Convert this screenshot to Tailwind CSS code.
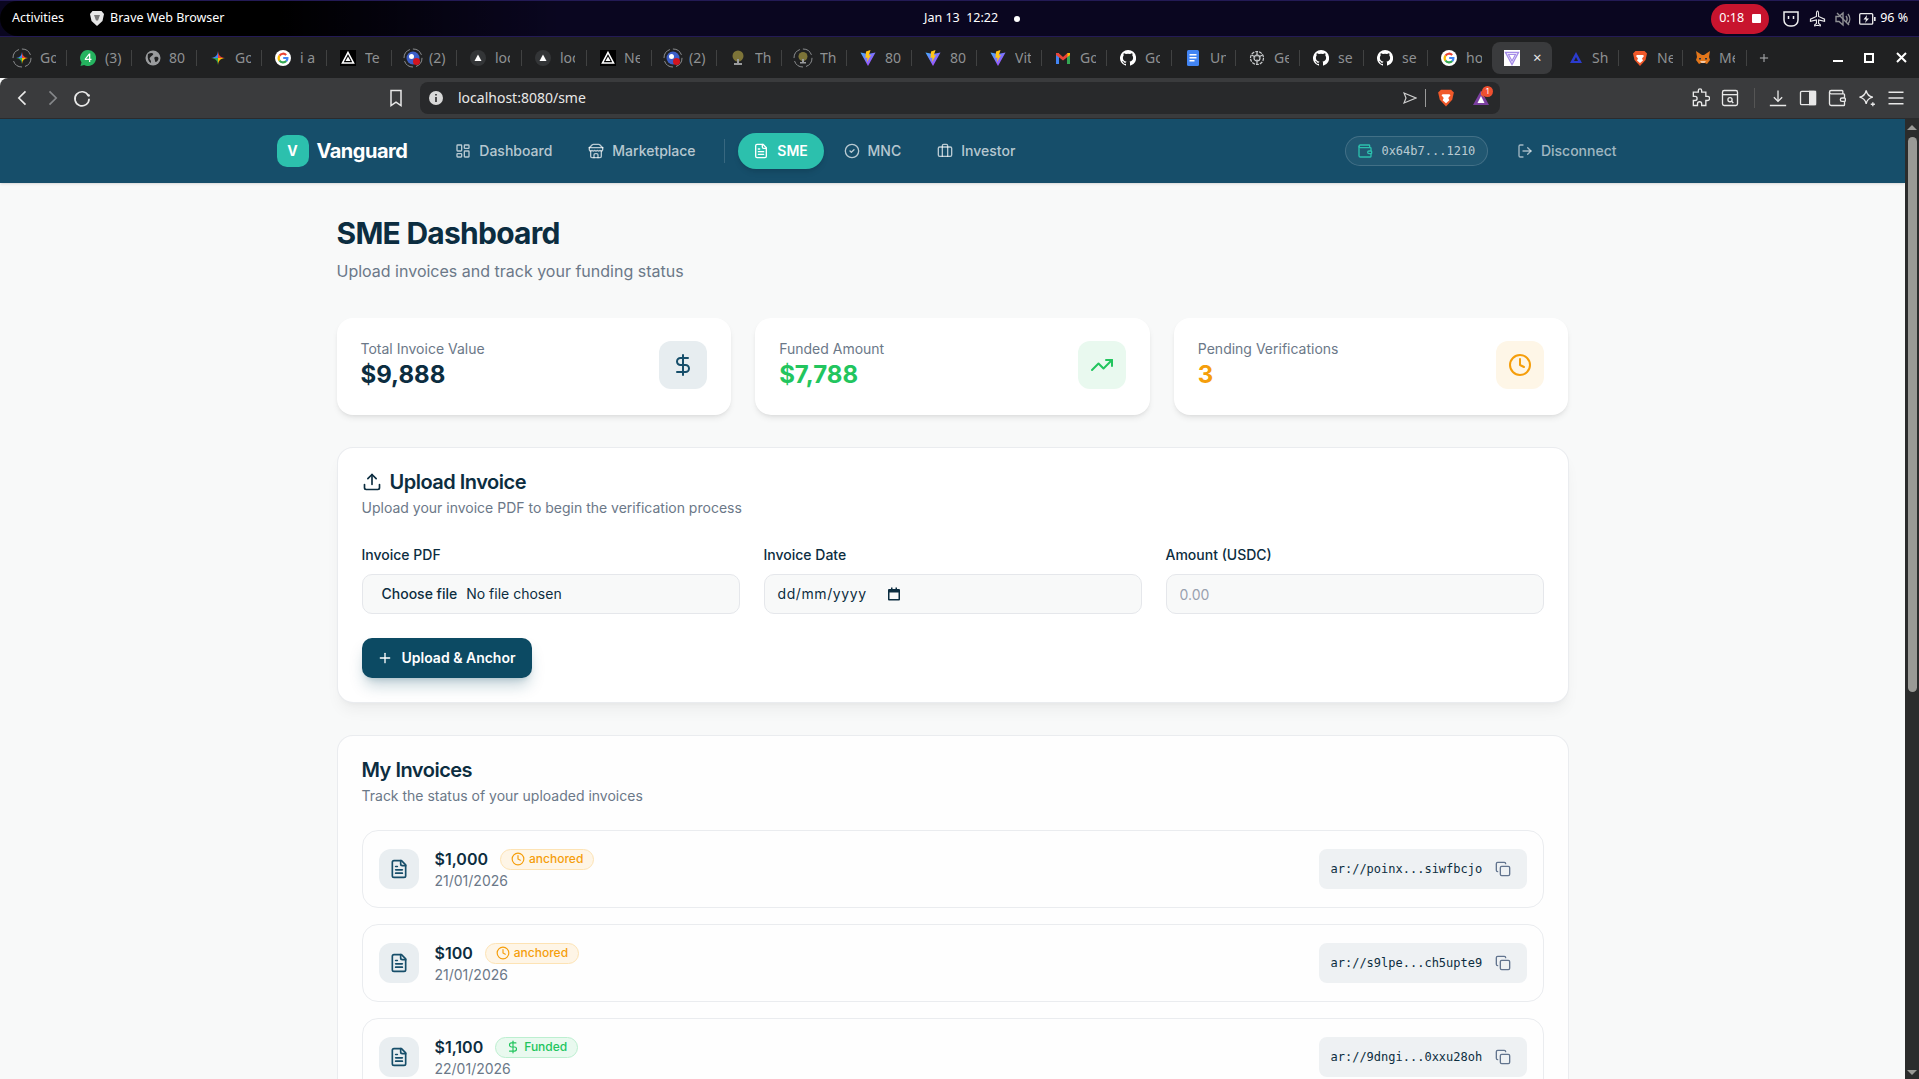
<!DOCTYPE html>
<html lang="en">
<head>
  <meta charset="UTF-8" />
  <title>Vanguard - SME Dashboard</title>
  <script src="https://cdn.jsdelivr.net/npm/@tailwindcss/browser@4"></script>
</head>
<body class="h-screen overflow-hidden flex flex-col bg-[#f8f9f9] font-[family-name:Inter,sans-serif] text-[#0c2d40]">

  <!-- shared icons -->
  <svg class="absolute w-0 h-0" aria-hidden="true">
    <defs>
      <linearGradient id="vit" x1="0" y1="0" x2="1" y2="1"><stop offset="0" stop-color="#41b0ff"/><stop offset="1" stop-color="#bd34fe"/></linearGradient>
    </defs>
    <symbol id="i-dash" viewBox="0 0 24 24"><rect x="3" y="3" width="7" height="9" rx="1"/><rect x="14" y="3" width="7" height="5" rx="1"/><rect x="14" y="12" width="7" height="9" rx="1"/><rect x="3" y="16" width="7" height="5" rx="1"/></symbol>
    <symbol id="i-store" viewBox="0 0 24 24"><path d="m2 7 4.41-4.41A2 2 0 0 1 7.83 2h8.34a2 2 0 0 1 1.42.59L22 7"/><path d="M4 12v8a2 2 0 0 0 2 2h12a2 2 0 0 0 2-2v-8"/><path d="M15 22v-4a2 2 0 0 0-2-2h-2a2 2 0 0 0-2 2v4"/><path d="M2 7h20"/><path d="M22 7v3a2 2 0 0 1-2 2a2.7 2.7 0 0 1-1.59-.63.7.7 0 0 0-.82 0A2.7 2.7 0 0 1 16 12a2.7 2.7 0 0 1-1.59-.63.7.7 0 0 0-.82 0A2.7 2.7 0 0 1 12 12a2.7 2.7 0 0 1-1.59-.63.7.7 0 0 0-.82 0A2.7 2.7 0 0 1 8 12a2.7 2.7 0 0 1-1.59-.63.7.7 0 0 0-.82 0A2.7 2.7 0 0 1 4 12a2 2 0 0 1-2-2V7"/></symbol>
    <symbol id="i-file" viewBox="0 0 24 24"><path d="M15 2H6a2 2 0 0 0-2 2v16a2 2 0 0 0 2 2h12a2 2 0 0 0 2-2V7Z"/><path d="M14 2v4a2 2 0 0 0 2 2h4"/><path d="M10 9H8"/><path d="M16 13H8"/><path d="M16 17H8"/></symbol>
    <symbol id="i-check" viewBox="0 0 24 24"><circle cx="12" cy="12" r="10"/><path d="m9 12 2 2 4-4"/></symbol>
    <symbol id="i-case" viewBox="0 0 24 24"><path d="M16 20V4a2 2 0 0 0-2-2h-4a2 2 0 0 0-2 2v16"/><rect x="2" y="6" width="20" height="14" rx="2"/></symbol>
    <symbol id="i-wallet" viewBox="0 0 24 24"><path d="M19 7V4a1 1 0 0 0-1-1H5a2 2 0 0 0 0 4h15a1 1 0 0 1 1 1v4h-3a2 2 0 0 0 0 4h3a1 1 0 0 0 1-1v-2a1 1 0 0 0-1-1"/><path d="M3 5v14a2 2 0 0 0 2 2h15a1 1 0 0 0 1-1v-4"/></symbol>
    <symbol id="i-out" viewBox="0 0 24 24"><path d="m16 17 5-5-5-5"/><path d="M21 12H9"/><path d="M9 21H5a2 2 0 0 1-2-2V5a2 2 0 0 1 2-2h4"/></symbol>
    <symbol id="i-dollar" viewBox="0 0 24 24"><path d="M12 2v20"/><path d="M17 5H9.5a3.5 3.5 0 0 0 0 7h5a3.5 3.5 0 0 1 0 7H6"/></symbol>
    <symbol id="i-trend" viewBox="0 0 24 24"><path d="M22 7 13.5 15.5 8.5 10.5 2 17"/><path d="M16 7h6v6"/></symbol>
    <symbol id="i-clock" viewBox="0 0 24 24"><circle cx="12" cy="12" r="10"/><path d="M12 6v6l4 2"/></symbol>
    <symbol id="i-upload" viewBox="0 0 24 24"><path d="M21 15v4a2 2 0 0 1-2 2H5a2 2 0 0 1-2-2v-4"/><path d="M17 8l-5-5-5 5"/><path d="M12 3v12"/></symbol>
    <symbol id="i-plus" viewBox="0 0 24 24"><path d="M5 12h14"/><path d="M12 5v14"/></symbol>
    <symbol id="i-copy" viewBox="0 0 24 24"><rect x="8" y="8" width="14" height="14" rx="2"/><path d="M4 16c-1.1 0-2-.9-2-2V4c0-1.1.9-2 2-2h10c1.1 0 2 .9 2 2"/></symbol>

    <!-- favicons -->
    <symbol id="t-star" viewBox="0 0 16 16"><path fill="#4285f4" d="M8 1C7.500 5.500 5.500 7.500 1 8h7Z"/><path fill="#ea4335" d="M8 1c.5 4.500 2.500 6.500 7 7H8Z"/><path fill="#fbbc04" d="M15 8c-4.500 .5-6.500 2.500-7 7V8Z"/><path fill="#34a853" d="M1 8c4.500 .5 6.500 2.500 7 7V8Z"/></symbol>
    <symbol id="t-ring" viewBox="0 0 20 20"><circle cx="10" cy="10" r="9" fill="none" stroke="#8a8c8e" stroke-width="1" stroke-dasharray="11 3"/><path fill="#4285f4" d="M10 4C9.600 7.700 7.700 9.600 4 10h6Z"/><path fill="#ea4335" d="M10 4c.4 3.700 2.300 5.600 6 6h-6Z"/><path fill="#fbbc04" d="M16 10c-3.700 .4-5.600 2.300-6 6v-6Z"/><path fill="#34a853" d="M4 10c3.700 .4 5.600 2.300 6 6v-6Z"/></symbol>
    <symbol id="t-wa" viewBox="0 0 16 16"><path fill="#25b35f" d="M8 0a8 8 0 1 1-3.800 15L.5 16l1-3.500A8 8 0 0 1 8 0Z"/><path fill="#fff" d="M9 3.500h1.300v5.300h1.200v1.100h-1.200v2H9v-2H4.800V8.800L9 3.500Zm0 2-2.800 3.300H9V5.500Z"/></symbol>
    <symbol id="t-globe" viewBox="0 0 16 16"><circle cx="8" cy="8" r="7.500" fill="#9a9c9e"/><path fill="#202122" d="M3 4c2-1 4-1.500 5-.5s-1 2-2 3-2 2-1 3 1 2 1 3.500C4 12 2 9 3 4Zm7 3c2-.5 3.500 0 3.500 1.500s-1.500 3-2.500 3.500-1-2-1.500-3 0-1.800.5-2Z"/></symbol>
    <symbol id="t-g" viewBox="0 0 16 16"><circle cx="8" cy="8" r="8" fill="#fff"/><g fill="none" stroke-width="2.200"><path stroke="#ea4335" d="M11.200 5a4.400 4.400 0 0 0-6.700 .6"/><path stroke="#fbbc04" d="M4.500 5.500a4.400 4.400 0 0 0 0 5"/><path stroke="#34a853" d="M4.500 10.500a4.400 4.400 0 0 0 6.800 .6"/><path stroke="#4285f4" d="M11.300 11.100A4.400 4.400 0 0 0 12.400 8H8.200"/></g></symbol>
    <symbol id="t-tri" viewBox="0 0 16 16"><rect width="16" height="16" fill="#000"/><path fill="none" stroke="#fff" stroke-width="1.600" d="M8 2.500 13.500 13h-11Z"/><path fill="#fff" d="M8 6.500 10.500 11h-5Z"/></symbol>
    <symbol id="t-blue" viewBox="0 0 20 20"><circle cx="10" cy="10" r="9" fill="none" stroke="#8a8c8e" stroke-dasharray="11 3"/><circle cx="10" cy="10" r="6.500" fill="#3d5fc8"/><circle cx="8.500" cy="8.500" r="2.500" fill="#fff"/><circle cx="13.500" cy="13.500" r="3.500" fill="#d3151f"/></symbol>
    <symbol id="t-dark" viewBox="0 0 16 16"><circle cx="8" cy="8" r="8" fill="#333537"/><path fill="#fff" d="M8 4.500 11.500 11h-7Z"/></symbol>
    <symbol id="t-tree" viewBox="0 0 16 16"><circle cx="8" cy="6" r="5.500" fill="#7d7438"/><path fill="#9a9c9e" d="M7 9h2v4h3v2H4v-2h3Z"/></symbol>
    <symbol id="t-treering" viewBox="0 0 20 20"><circle cx="10" cy="10" r="9" fill="none" stroke="#8a8c8e" stroke-dasharray="11 3"/><circle cx="10" cy="8.500" r="4.500" fill="#7d7438"/><path fill="#9a9c9e" d="M9 11h2v3h2v1.500H7V14h2Z"/></symbol>
    <symbol id="t-vite" viewBox="0 0 16 16"><path fill="url(#vit)" d="M.5 2.500 8 4l7.500-1.500L8 16Z"/><path fill="#ffc517" d="M10.500 0 6 1.500l-.5 6.500 2-.5-.5 4.500 4-7-2.200.5Z"/></symbol>
    <symbol id="t-gmail" viewBox="0 0 16 16"><path fill="#4285f4" d="M1 3h3v11H1Z"/><path fill="#34a853" d="M12 3h3v11h-3Z"/><path fill="#ea4335" d="M1 3h2.500L8 7l4.500-4H15v2l-7 5.500L1 5Z"/><path fill="#fbbc04" d="M12.500 3H15v2l-2.500 2Z"/></symbol>
    <symbol id="t-gh" viewBox="0 0 16 16"><path fill="#fff" d="M8 0a8 8 0 0 0-2.500 15.600c.4.100.5-.2.500-.4v-1.400c-2.200.5-2.700-1-2.700-1-.4-.9-.9-1.200-.9-1.200-.7-.5.100-.5.100-.5.800.1 1.200.8 1.200.8.700 1.200 1.900.9 2.300.7.100-.5.300-.9.500-1.100-1.800-.2-3.600-.9-3.600-4 0-.9.300-1.600.8-2.100-.1-.2-.4-1 .1-2.100 0 0 .7-.2 2.200.8a7.500 7.500 0 0 1 4 0c1.500-1 2.200-.8 2.200-.8.500 1.100.2 1.900.1 2.100.5.500.8 1.200.8 2.100 0 3.100-1.900 3.800-3.600 4 .3.200.5.700.5 1.500v2.200c0 .2.100.5.600.4A8 8 0 0 0 8 0Z"/></symbol>
    <symbol id="t-doc" viewBox="0 0 16 16"><rect x="2" width="12" height="16" rx="1.500" fill="#4285f4"/><path fill="#fff" d="M4.500 4h7v1.500h-7Zm0 3h7v1.500h-7Zm0 3h5v1.500h-5Z"/></symbol>
    <symbol id="t-gpt" viewBox="0 0 16 16"><g fill="none" stroke="#c9cbcd" stroke-width="1.200"><circle cx="8" cy="8" r="6.500" stroke-dasharray="3 1"/><circle cx="8" cy="8" r="3"/><path d="M8 1.500v5M2.500 5l4 2M13.500 5l-4 2M8 14.500v-5"/></g></symbol>
    <symbol id="t-active" viewBox="0 0 16 16"><rect width="16" height="16" fill="#fff"/><path fill="none" stroke="#a58ce8" stroke-width="1.400" d="M1.500 2.500h13L8 14.500Z"/><path fill="none" stroke="#a58ce8" stroke-width="1.200" d="M4.500 4.500h7L8 11Z"/></symbol>
    <symbol id="t-shape" viewBox="0 0 16 16"><path fill="#2b3bcf" d="M8 2 14 13H2Z"/><path fill="#202122" d="M8 7 10 11H6Z"/></symbol>
    <symbol id="t-brave" viewBox="0 0 16 16"><path fill="#f1592a" d="M3.500 1h9L15 3.500 13.500 10 8 16 2.500 10 1 3.500Z"/><path fill="#fff" d="M5 5h6l1 1-2 2.500 1 2L8 13l-3-2.500 1-2L4 6Z"/></symbol>
    <symbol id="t-fox" viewBox="0 0 16 16"><path fill="#e2761b" d="M1 1 7 5h2l6-4-1 6 1 3-3 4-2-1H6l-2 1-3-4 1-3Z"/><path fill="#f6c9a3" d="M5 11h6l-1.500 2h-3Z"/><path fill="#233447" d="M4 8h2v1.500H4Zm6 0h2v1.500h-2Z"/></symbol>
  </svg>

  <!-- system bar -->
  <div class="h-[37px] shrink-0 flex items-center bg-[#0a0620] border-y border-[#231a55] text-white text-[12.5px] font-[family-name:'Noto_Sans',sans-serif]">
    <div class="flex items-center h-full w-[560px] bg-gradient-to-r from-black via-black to-transparent rounded-l-[18px]">
      <span class="ml-[12px]">Activities</span>
      <svg class="ml-[26px] w-[14px] h-[15px]" viewBox="0 0 14 15"><path fill="#e6e6e6" d="M2.500 0h9L14 3l-1.500 7L7 15 1.500 10 0 3Z"/><path fill="#777" d="M4 4h6L8 9.500H6Z"/></svg>
      <span class="ml-[6px]">Brave Web Browser</span>
    </div>
    <span class="ml-[364px]">Jan 13&nbsp; 12:22</span>
    <span class="ml-[16px] w-[6px] h-[6px] rounded-full bg-white"></span>
    <div class="ml-[691px] w-[58px] h-[30px] rounded-full bg-[#c8142e] flex items-center justify-center gap-[8px]">
      <span>0:18</span><span class="w-[9px] h-[9px] bg-white rounded-[1px]"></span>
    </div>
    <svg class="ml-[13px] w-[18px] h-[18px]" viewBox="0 0 18 18" fill="none" stroke="#eee" stroke-width="1.500"><path d="M2 2h14v8a6 6 0 0 1-6 6H8a6 6 0 0 1-6-6Z"/><path d="M6.500 6v3M11.500 6v3"/></svg>
    <svg class="ml-[9px] w-[17px] h-[17px]" viewBox="0 0 24 24" fill="none" stroke="#eee" stroke-width="1.500"><path d="M12 1.500c1 0 1.500 2 1.500 5v2.500L22 13v3l-8.500-2v5l2.500 2v1.500L12 21.500l-4 1V21l2.500-2v-5L2 16v-3l8.500-4V6.500c0-3 .5-5 1.500-5Z"/></svg>
    <svg class="ml-[8px] w-[18px] h-[18px]" viewBox="0 0 18 18" fill="none" stroke="#8f9094" stroke-width="1.400"><path d="M2 6.500v5h3l4 3.500v-12L5 6.500Z"/><path d="M12 6a5 5 0 0 1 0 6M14 4a8 8 0 0 1 0 10M3 3l12 12"/></svg>
    <svg class="ml-[7px] w-[17px] h-[14px]" viewBox="0 0 17 14"><rect x=".7" y="1.700" width="13" height="10.500" rx="1" fill="none" stroke="#eee" stroke-width="1.300"/><rect x="15" y="5" width="1.600" height="4" fill="#eee"/><path fill="#eee" d="M8 3 4.500 7.500h2.500L6 11l4-4.500H7.500Z"/></svg>
    <span class="ml-[4px] whitespace-nowrap">96 %</span>
  </div>

  <!-- tab strip -->
  <div class="h-[41px] shrink-0 flex items-center pl-[2px] bg-[#202122] text-[14px] text-[#8f9193] font-[family-name:'Noto_Sans',sans-serif]">
    <div class="w-[65px] h-4 flex items-center border-r border-white/15"><svg class="w-5 h-5 ml-[10px] mr-[8px]"><use href="#t-ring"/></svg><span class="w-[16px] overflow-hidden">Go</span></div>
    <div class="w-[65px] h-4 flex items-center border-r border-white/15"><svg class="w-4 h-4 ml-[13px] mr-[9px]"><use href="#t-wa"/></svg><span class="w-[20px] overflow-hidden">(3)</span></div>
    <div class="w-[65px] h-4 flex items-center border-r border-white/15"><svg class="w-4 h-4 ml-[13px] mr-[8px]"><use href="#t-globe"/></svg><span class="w-[18px] overflow-hidden">80</span></div>
    <div class="w-[65px] h-4 flex items-center border-r border-white/15"><svg class="w-4 h-4 ml-[13px] mr-[9px]"><use href="#t-star"/></svg><span class="w-[16px] overflow-hidden">Go</span></div>
    <div class="w-[65px] h-4 flex items-center border-r border-white/15"><svg class="w-4 h-4 ml-[13px] mr-[9px]"><use href="#t-g"/></svg><span class="w-[16px] overflow-hidden whitespace-nowrap">i a</span></div>
    <div class="w-[65px] h-4 flex items-center border-r border-white/15"><svg class="w-4 h-4 ml-[13px] mr-[9px]"><use href="#t-tri"/></svg><span class="w-[16px] overflow-hidden">Te</span></div>
    <div class="w-[65px] h-4 flex items-center border-r border-white/15"><svg class="w-5 h-5 ml-[11px] mr-[6px]"><use href="#t-blue"/></svg><span class="w-[18px] overflow-hidden">(2)</span></div>
    <div class="w-[65px] h-4 flex items-center border-r border-white/15"><svg class="w-4 h-4 ml-[13px] mr-[9px]"><use href="#t-dark"/></svg><span class="w-[15px] overflow-hidden">loc</span></div>
    <div class="w-[65px] h-4 flex items-center border-r border-white/15"><svg class="w-4 h-4 ml-[13px] mr-[9px]"><use href="#t-dark"/></svg><span class="w-[15px] overflow-hidden">loc</span></div>
    <div class="w-[65px] h-4 flex items-center border-r border-white/15"><svg class="w-4 h-4 ml-[13px] mr-[8px]"><use href="#t-tri"/></svg><span class="w-[16px] overflow-hidden">Ne</span></div>
    <div class="w-[65px] h-4 flex items-center border-r border-white/15"><svg class="w-5 h-5 ml-[11px] mr-[6px]"><use href="#t-blue"/></svg><span class="w-[18px] overflow-hidden">(2)</span></div>
    <div class="w-[65px] h-4 flex items-center border-r border-white/15"><svg class="w-4 h-4 ml-[13px] mr-[9px]"><use href="#t-tree"/></svg><span class="w-[17px] overflow-hidden">Th</span></div>
    <div class="w-[65px] h-4 flex items-center border-r border-white/15"><svg class="w-5 h-5 ml-[11px] mr-[7px]"><use href="#t-treering"/></svg><span class="w-[17px] overflow-hidden">Th</span></div>
    <div class="w-[65px] h-4 flex items-center border-r border-white/15"><svg class="w-4 h-4 ml-[13px] mr-[9px]"><use href="#t-vite"/></svg><span class="w-[17px] overflow-hidden">80</span></div>
    <div class="w-[65px] h-4 flex items-center border-r border-white/15"><svg class="w-4 h-4 ml-[13px] mr-[9px]"><use href="#t-vite"/></svg><span class="w-[17px] overflow-hidden">80</span></div>
    <div class="w-[65px] h-4 flex items-center border-r border-white/15"><svg class="w-4 h-4 ml-[13px] mr-[9px]"><use href="#t-vite"/></svg><span class="w-[16px] overflow-hidden">Vit</span></div>
    <div class="w-[65px] h-4 flex items-center border-r border-white/15"><svg class="w-4 h-4 ml-[13px] mr-[9px]"><use href="#t-gmail"/></svg><span class="w-[16px] overflow-hidden">Go</span></div>
    <div class="w-[65px] h-4 flex items-center border-r border-white/15"><svg class="w-4 h-4 ml-[13px] mr-[9px]"><use href="#t-gh"/></svg><span class="w-[15px] overflow-hidden">Go</span></div>
    <div class="w-[64px] h-4 flex items-center border-r border-white/15"><svg class="w-4 h-4 ml-[13px] mr-[9px]"><use href="#t-doc"/></svg><span class="w-[16px] overflow-hidden">Un</span></div>
    <div class="w-[64px] h-4 flex items-center border-r border-white/15"><svg class="w-4 h-4 ml-[13px] mr-[9px]"><use href="#t-gpt"/></svg><span class="w-[15px] overflow-hidden">Ge</span></div>
    <div class="w-[64px] h-4 flex items-center border-r border-white/15"><svg class="w-4 h-4 ml-[13px] mr-[9px]"><use href="#t-gh"/></svg><span class="w-[16px] overflow-hidden">se</span></div>
    <div class="w-[64px] h-4 flex items-center border-r border-white/15"><svg class="w-4 h-4 ml-[13px] mr-[9px]"><use href="#t-gh"/></svg><span class="w-[16px] overflow-hidden">se</span></div>
    <div class="w-[64px] h-4 flex items-center"><svg class="w-4 h-4 ml-[13px] mr-[9px]"><use href="#t-g"/></svg><span class="w-[16px] overflow-hidden">ho</span></div>
    <div class="w-[60px] h-[32px] flex items-center rounded-lg bg-[#3a3b3d] text-[#e8e8e8]"><svg class="w-4 h-4 ml-[12px]"><use href="#t-active"/></svg><span class="ml-[13px] text-[15px] leading-none">×</span></div>
    <div class="w-[67px] h-4 flex items-center border-r border-white/15"><svg class="w-4 h-4 ml-[16px] mr-[8px]"><use href="#t-shape"/></svg><span class="w-[16px] overflow-hidden">Sh</span></div>
    <div class="w-[64px] h-4 flex items-center border-r border-white/15"><svg class="w-4 h-4 ml-[13px] mr-[9px]"><use href="#t-brave"/></svg><span class="w-[16px] overflow-hidden">Ne</span></div>
    <div class="w-[64px] h-4 flex items-center border-r border-white/15"><svg class="w-4 h-4 ml-[12px] mr-[8px]"><use href="#t-fox"/></svg><span class="w-[16px] overflow-hidden">Me</span></div>
    <svg class="w-[14px] h-[14px] ml-[10px] text-[#a0a2a4]" viewBox="0 0 24 24" fill="none" stroke="currentColor" stroke-width="2"><use href="#i-plus"/></svg>
    <span class="ml-[62px] w-[10px] h-[2px] mt-[6px] bg-white"></span>
    <span class="ml-[21px] w-[10px] h-[10px] border-2 border-white"></span>
    <svg class="ml-[22px] w-[11px] h-[11px]" viewBox="0 0 11 11" stroke="#fff" stroke-width="2"><path d="M1 1l9 9M10 1l-9 9"/></svg>
  </div>

  <!-- browser toolbar -->
  <div class="h-[41px] shrink-0 flex items-center pl-[13px] pb-px bg-[#3a3b3d] rounded-tl-lg border-b border-[#2a2b2d] text-[#e8e8e8]">
    <svg class="w-5 h-5" viewBox="0 0 24 24" fill="none" stroke="currentColor" stroke-width="2"><path d="m15 4-8 8 8 8"/></svg>
    <svg class="w-5 h-5 ml-[9px] text-[#85878a]" viewBox="0 0 24 24" fill="none" stroke="currentColor" stroke-width="2"><path d="m9 4 8 8-8 8"/></svg>
    <svg class="w-5 h-5 ml-[10px]" viewBox="0 0 24 24" fill="none" stroke="currentColor" stroke-width="2"><path d="M19.500 9A8.500 8.500 0 1 0 20.500 13"/><circle cx="20" cy="9" r="1.500" fill="currentColor" stroke="none"/></svg>
    <svg class="w-5 h-5 ml-[294px]" viewBox="0 0 24 24" fill="none" stroke="currentColor" stroke-width="1.800"><path d="M6 3h12v18l-6-4-6 4Z"/></svg>
    <div class="w-[1080px] h-[32px] ml-[14px] flex items-center rounded-lg bg-[#28292b] pl-[9px] pr-[7px]">
      <svg class="w-[14px] h-[14px]" viewBox="0 0 14 14"><circle cx="7" cy="7" r="7" fill="#d8d8d8"/><path fill="#28292b" d="M6.200 3h1.600v1.600H6.200Zm0 3h1.600v5H6.200Z"/></svg>
      <span class="ml-[15px] text-[14px] font-[family-name:'Noto_Sans',sans-serif]">localhost:8080/sme</span>
      <svg class="ml-auto w-[14px] h-[14px]" viewBox="0 0 14 14" fill="none" stroke="#d0d0d0" stroke-width="1.200"><path d="M1 2l12 5-12 5 2-5Z"/></svg>
      <span class="ml-[8px] w-px h-[18px] bg-[#9a9a9a]"></span>
      <svg class="ml-[11px] w-[18px] h-[21px]"><use href="#t-brave"/></svg>
      <svg class="ml-[17px] w-[18px] h-[18px]" viewBox="0 0 18 18"><path fill="#7b3fa0" d="M9 1.500 17 16H1Z"/><path fill="#ef5a2c" d="M9 1.500 13 9 9 6Z"/><path fill="#fff" d="M9 7l3.500 7h-7Z"/></svg>
      <span class="-ml-[8px] -mt-[12px] w-[11px] h-[11px] rounded-full bg-[#ef5030] text-white text-[8px] leading-[11px] text-center">1</span>
    </div>
    <svg class="w-5 h-5 ml-[190px]" viewBox="0 0 24 24" fill="none" stroke="currentColor" stroke-width="1.600"><path d="M10 3a2 2 0 0 1 4 0v2h5v5h2a2.500 2.500 0 0 1 0 5h-2v6h-5v-2a2.500 2.500 0 0 0-5 0v2H4v-6h2a2.500 2.500 0 0 0 0-5H4V5h6Z"/></svg>
    <svg class="w-5 h-5 ml-[10px]" viewBox="0 0 24 24" fill="none" stroke="currentColor" stroke-width="1.600"><rect x="3" y="3" width="18" height="18" rx="2"/><path d="M3 8h18"/><circle cx="12" cy="14" r="2.500"/><path d="m14 16 2 2"/></svg>
    <span class="ml-[14px] w-px h-[20px] bg-[#555]"></span>
    <svg class="w-5 h-5 ml-[13px]" viewBox="0 0 24 24" fill="none" stroke="currentColor" stroke-width="1.600"><path d="M12 3v13"/><path d="m7 11 5 5 5-5"/><path d="M3 20v1h18v-1"/></svg>
    <svg class="w-5 h-5 ml-[10px]" viewBox="0 0 24 24" fill="none" stroke="currentColor" stroke-width="1.600"><rect x="3" y="4" width="18" height="16" rx="1.500"/><path fill="currentColor" d="M14 4h7v16h-7Z"/></svg>
    <svg class="w-5 h-5 ml-[9px]" viewBox="0 0 24 24" fill="none" stroke="currentColor" stroke-width="1.600"><use href="#i-wallet"/></svg>
    <svg class="w-5 h-5 ml-[10px]" viewBox="0 0 24 24" fill="none" stroke="currentColor" stroke-width="1.600"><path d="M11 3c1 5 3 7 8 8-5 1-7 3-8 8-1-5-3-7-8-8 5-1 7-3 8-8Z"/><path d="M19 17v5M16.500 19.500h5"/></svg>
    <svg class="w-5 h-5 ml-[9px]" viewBox="0 0 24 24" fill="none" stroke="currentColor" stroke-width="1.800"><path d="M3 5h18M3 12h18M3 19h18"/></svg>
  </div>

  <div class="flex-1 min-h-0 flex">
    <div class="flex-1 min-w-0 overflow-hidden">

      <!-- app nav -->
      <nav class="h-[64px] bg-[#164e6a] shadow-sm">
        <div class="max-w-[1400px] h-full mx-auto px-6 flex items-center">
          <div class="w-8 h-8 rounded-[10px] bg-[#2cc0ad] flex items-center justify-center text-white text-sm font-bold">V</div>
          <span class="ml-2 text-xl font-bold text-white tracking-tight">Vanguard</span>
          <div class="ml-[48px] flex items-center gap-2 text-sm font-medium text-white/70">
            <svg class="w-4 h-4" fill="none" stroke="currentColor" stroke-width="2" stroke-linecap="round" stroke-linejoin="round"><use href="#i-dash"/></svg>
            <span>Dashboard</span>
          </div>
          <div class="ml-[36px] flex items-center gap-2 text-sm font-medium text-white/70">
            <svg class="w-4 h-4" fill="none" stroke="currentColor" stroke-width="2" stroke-linecap="round" stroke-linejoin="round"><use href="#i-store"/></svg>
            <span>Marketplace</span>
          </div>
          <span class="ml-[28px] w-px h-6 bg-white/15"></span>
          <div class="ml-[13px] w-[86px] h-9 rounded-full bg-[#2cc0ad] shadow-md flex items-center justify-center gap-2 text-sm font-semibold text-white">
            <svg class="w-4 h-4" fill="none" stroke="currentColor" stroke-width="2" stroke-linecap="round" stroke-linejoin="round"><use href="#i-file"/></svg>
            <span>SME</span>
          </div>
          <div class="ml-[20px] flex items-center gap-2 text-sm font-medium text-white/70">
            <svg class="w-4 h-4" fill="none" stroke="currentColor" stroke-width="2" stroke-linecap="round" stroke-linejoin="round"><use href="#i-check"/></svg>
            <span>MNC</span>
          </div>
          <div class="ml-[36px] flex items-center gap-2 text-sm font-medium text-white/70">
            <svg class="w-4 h-4" fill="none" stroke="currentColor" stroke-width="2" stroke-linecap="round" stroke-linejoin="round"><use href="#i-case"/></svg>
            <span>Investor</span>
          </div>
          <div class="ml-auto w-[143px] h-[30px] rounded-full border border-white/15 bg-white/5 flex items-center justify-center gap-2 text-xs text-white/70 font-[family-name:'DejaVu_Sans_Mono',monospace]">
            <svg class="w-4 h-4 text-[#2cc0ad]" fill="none" stroke="currentColor" stroke-width="2" stroke-linecap="round" stroke-linejoin="round"><use href="#i-wallet"/></svg>
            <span>0x64b7...1210</span>
          </div>
          <div class="ml-[29px] flex items-center gap-2 text-sm font-medium text-white/60">
            <svg class="w-4 h-4" fill="none" stroke="currentColor" stroke-width="2" stroke-linecap="round" stroke-linejoin="round"><use href="#i-out"/></svg>
            <span>Disconnect</span>
          </div>
          <span class="w-3"></span>
        </div>
      </nav>

      <main class="max-w-7xl mx-auto px-6 pt-8">
        <h1 class="text-3xl font-bold tracking-tight">SME Dashboard</h1>
        <p class="mt-2 text-base text-[#6b7888]">Upload invoices and track your funding status</p>

        <!-- stats -->
        <div class="mt-[35px] grid grid-cols-3 gap-6">
          <div class="rounded-2xl bg-white shadow-md shadow-black/8 px-6 pt-[21px] pb-6 flex items-center justify-between">
            <div>
              <p class="text-sm text-[#6b7888]">Total Invoice Value</p>
              <p class="text-2xl font-bold">$9,888</p>
            </div>
            <div class="w-12 h-12 rounded-xl bg-[#e7edf0] flex items-center justify-center text-[#164e6a]">
              <svg class="w-6 h-6" fill="none" stroke="currentColor" stroke-width="2" stroke-linecap="round" stroke-linejoin="round"><use href="#i-dollar"/></svg>
            </div>
          </div>
          <div class="rounded-2xl bg-white shadow-md shadow-black/8 px-6 pt-[21px] pb-6 flex items-center justify-between">
            <div>
              <p class="text-sm text-[#6b7888]">Funded Amount</p>
              <p class="text-2xl font-bold text-[#22c55e]">$7,788</p>
            </div>
            <div class="w-12 h-12 rounded-xl bg-[#e9f9ef] flex items-center justify-center text-[#22c55e]">
              <svg class="w-6 h-6" fill="none" stroke="currentColor" stroke-width="2" stroke-linecap="round" stroke-linejoin="round"><use href="#i-trend"/></svg>
            </div>
          </div>
          <div class="rounded-2xl bg-white shadow-md shadow-black/8 px-6 pt-[21px] pb-6 flex items-center justify-between">
            <div>
              <p class="text-sm text-[#6b7888]">Pending Verifications</p>
              <p class="text-2xl font-bold text-[#f59e0b]">3</p>
            </div>
            <div class="w-12 h-12 rounded-xl bg-[#fef6e7] flex items-center justify-center text-[#f59e0b]">
              <svg class="w-6 h-6" fill="none" stroke="currentColor" stroke-width="2" stroke-linecap="round" stroke-linejoin="round"><use href="#i-clock"/></svg>
            </div>
          </div>
        </div>

        <!-- upload -->
        <section class="mt-8 rounded-2xl border border-gray-200/80 bg-white shadow-lg shadow-black/5 px-6 pt-5 pb-6">
          <h2 class="flex items-center gap-2 text-xl font-semibold tracking-tight">
            <svg class="w-5 h-5" fill="none" stroke="currentColor" stroke-width="2" stroke-linecap="round" stroke-linejoin="round"><use href="#i-upload"/></svg>
            Upload Invoice
          </h2>
          <p class="mt-0.5 text-sm text-[#6b7888]">Upload your invoice PDF to begin the verification process</p>
          <div class="mt-[27px] grid grid-cols-3 gap-6">
            <div>
              <label class="block mb-[9px] text-sm font-medium">Invoice PDF</label>
              <div class="h-10 rounded-[10px] border border-gray-200 bg-[#f8f9f9] flex items-center pl-[19px] text-sm">
                <span class="font-medium">Choose file</span><span class="ml-[9px]">No file chosen</span>
              </div>
            </div>
            <div>
              <label class="block mb-[9px] text-sm font-medium">Invoice Date</label>
              <div class="h-10 rounded-[10px] border border-gray-200 bg-[#f8f9f9] flex items-center pl-[13px] text-sm">
                <span class="tracking-[0.6px]">dd/mm/yyyy</span>
                <svg class="ml-[20px] w-[14px] h-[14px]" viewBox="0 0 14 14"><path fill="#0c2d40" d="M2 2h2V.500h1.500V2h3V.500H10V2h2a1 1 0 0 1 1 1v9.500a1 1 0 0 1-1 1H2a1 1 0 0 1-1-1V3a1 1 0 0 1 1-1Zm.500 3.500v6.500h9V5.500Z"/></svg>
              </div>
            </div>
            <div>
              <label class="block mb-[9px] text-sm font-medium">Amount (USDC)</label>
              <input type="text" placeholder="0.00" class="w-full h-10 rounded-[10px] border border-gray-200 bg-[#f8f9f9] px-[13px] text-sm placeholder:text-gray-400" />
            </div>
          </div>
          <button class="mt-6 w-[170px] h-10 rounded-[10px] bg-[#0c4a63] shadow-lg shadow-[#0c4a63]/25 flex items-center justify-center gap-2 text-sm font-semibold text-white">
            <svg class="w-4 h-4" fill="none" stroke="currentColor" stroke-width="2" stroke-linecap="round" stroke-linejoin="round"><use href="#i-plus"/></svg>
            Upload &amp; Anchor
          </button>
        </section>

        <!-- invoices -->
        <section class="mt-8 rounded-2xl border border-gray-200/80 bg-[#fefefe] px-6 pt-5 pb-6">
          <h2 class="text-xl font-semibold tracking-tight">My Invoices</h2>
          <p class="mt-0.5 text-sm text-[#6b7888]">Track the status of your uploaded invoices</p>
          <div class="mt-6 flex flex-col gap-4">

            <div class="h-[78px] rounded-2xl border border-gray-200/80 px-4 flex items-center">
              <div class="w-10 h-10 rounded-xl bg-[#e9eef1] flex items-center justify-center text-[#164e6a]">
                <svg class="w-5 h-5" fill="none" stroke="currentColor" stroke-width="2" stroke-linecap="round" stroke-linejoin="round"><use href="#i-file"/></svg>
              </div>
              <div class="ml-4">
                <div class="flex items-center gap-3">
                  <span class="font-semibold">$1,000</span>
                  <span class="h-[21px] px-2.5 rounded-full border border-[#fde3b4] bg-[#fef5e6] flex items-center gap-1 text-xs font-medium text-[#f59e0b]">
                    <svg class="w-3.5 h-3.5" fill="none" stroke="currentColor" stroke-width="2" stroke-linecap="round" stroke-linejoin="round"><use href="#i-clock"/></svg>anchored
                  </span>
                </div>
                <p class="text-sm text-[#6b7888]">21/01/2026</p>
              </div>
              <div class="ml-auto w-[208px] h-10 rounded-lg bg-[#eef1f3] flex items-center justify-between pl-3 pr-4 text-xs font-[family-name:'DejaVu_Sans_Mono',monospace]">
                <span>ar://poinx...siwfbcjo</span>
                <svg class="w-4 h-4 text-slate-500" fill="none" stroke="currentColor" stroke-width="2" stroke-linecap="round" stroke-linejoin="round"><use href="#i-copy"/></svg>
              </div>
            </div>

            <div class="h-[78px] rounded-2xl border border-gray-200/80 px-4 flex items-center">
              <div class="w-10 h-10 rounded-xl bg-[#e9eef1] flex items-center justify-center text-[#164e6a]">
                <svg class="w-5 h-5" fill="none" stroke="currentColor" stroke-width="2" stroke-linecap="round" stroke-linejoin="round"><use href="#i-file"/></svg>
              </div>
              <div class="ml-4">
                <div class="flex items-center gap-3">
                  <span class="font-semibold">$100</span>
                  <span class="h-[21px] px-2.5 rounded-full border border-[#fde3b4] bg-[#fef5e6] flex items-center gap-1 text-xs font-medium text-[#f59e0b]">
                    <svg class="w-3.5 h-3.5" fill="none" stroke="currentColor" stroke-width="2" stroke-linecap="round" stroke-linejoin="round"><use href="#i-clock"/></svg>anchored
                  </span>
                </div>
                <p class="text-sm text-[#6b7888]">21/01/2026</p>
              </div>
              <div class="ml-auto w-[208px] h-10 rounded-lg bg-[#eef1f3] flex items-center justify-between pl-3 pr-4 text-xs font-[family-name:'DejaVu_Sans_Mono',monospace]">
                <span>ar://s9lpe...ch5upte9</span>
                <svg class="w-4 h-4 text-slate-500" fill="none" stroke="currentColor" stroke-width="2" stroke-linecap="round" stroke-linejoin="round"><use href="#i-copy"/></svg>
              </div>
            </div>

            <div class="h-[78px] rounded-2xl border border-gray-200/80 px-4 flex items-center">
              <div class="w-10 h-10 rounded-xl bg-[#e9eef1] flex items-center justify-center text-[#164e6a]">
                <svg class="w-5 h-5" fill="none" stroke="currentColor" stroke-width="2" stroke-linecap="round" stroke-linejoin="round"><use href="#i-file"/></svg>
              </div>
              <div class="ml-4">
                <div class="flex items-center gap-3">
                  <span class="font-semibold">$1,100</span>
                  <span class="h-[21px] px-2.5 rounded-full border border-[#bcefd0] bg-[#e9f9ef] flex items-center gap-1 text-xs font-medium text-[#22c55e]">
                    <svg class="w-3.5 h-3.5" fill="none" stroke="currentColor" stroke-width="2" stroke-linecap="round" stroke-linejoin="round"><use href="#i-dollar"/></svg>Funded
                  </span>
                </div>
                <p class="text-sm text-[#6b7888]">22/01/2026</p>
              </div>
              <div class="ml-auto w-[208px] h-10 rounded-lg bg-[#eef1f3] flex items-center justify-between pl-3 pr-4 text-xs font-[family-name:'DejaVu_Sans_Mono',monospace]">
                <span>ar://9dngi...0xxu28oh</span>
                <svg class="w-4 h-4 text-slate-500" fill="none" stroke="currentColor" stroke-width="2" stroke-linecap="round" stroke-linejoin="round"><use href="#i-copy"/></svg>
              </div>
            </div>

          </div>
        </section>
      </main>
    </div>

    <!-- scrollbar -->
    <div class="w-[14px] shrink-0 bg-[#2b2c2c] flex flex-col items-center pt-[6px] pb-1">
      <span class="w-0 h-0 border-x-[5px] border-x-transparent border-b-[5px] border-b-[#9a9a96]"></span>
      <span class="mt-[7px] w-[9px] h-[555px] rounded-full bg-[#9a9a96]"></span>
      <span class="mt-auto w-0 h-0 border-x-[5px] border-x-transparent border-t-[5px] border-t-[#9a9a96]"></span>
    </div>
  </div>
</body>
</html>
